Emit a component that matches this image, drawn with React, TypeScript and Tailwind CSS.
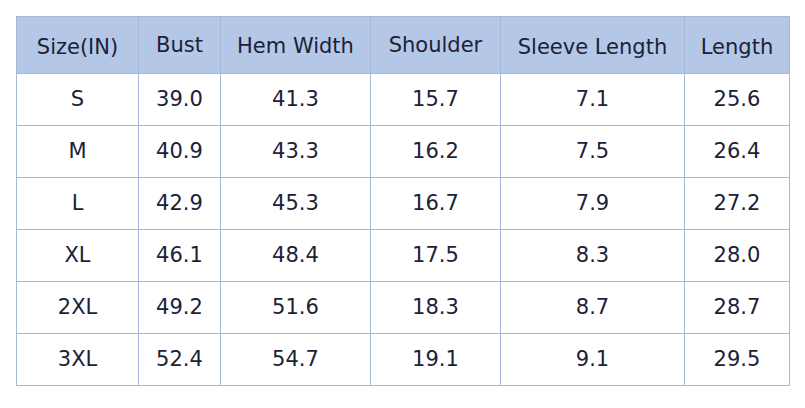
import React from "react";

const headers: { label: string; cls: string }[] = [
  { label: "Size(IN)", cls: "pt-[5px]" },
  { label: "Bust", cls: "pt-0" },
  { label: "Hem Width", cls: "pt-[2px]" },
  { label: "Shoulder", cls: "pt-[1px]" },
  { label: "Sleeve Length", cls: "pt-[5px]" },
  { label: "Length", cls: "pt-[5px]" },
];

const rows: string[][] = [
  ["S", "39.0", "41.3", "15.7", "7.1", "25.6"],
  ["M", "40.9", "43.3", "16.2", "7.5", "26.4"],
  ["L", "42.9", "45.3", "16.7", "7.9", "27.2"],
  ["XL", "46.1", "48.4", "17.5", "8.3", "28.0"],
  ["2XL", "49.2", "51.6", "18.3", "8.7", "28.7"],
  ["3XL", "52.4", "54.7", "19.1", "9.1", "29.5"],
];

export default function App() {
  return (
    <div
      className="w-[805px] h-[408px] bg-white pt-4 pl-4"
      style={{ fontFamily: '"DejaVu Sans", Verdana, sans-serif' }}
    >
      <div className="grid w-[774px] grid-cols-[121px_81px_149px_129px_183px_104px] grid-rows-[56px_repeat(6,51px)] gap-px bg-[#a6b8d6] p-px text-[21px] text-[#1a2238]">
        {headers.map((h) => (
          <div
            key={h.label}
            className={`flex items-center justify-center bg-[#b4c7e7] leading-none ${h.cls}`}
          >
            {h.label}
          </div>
        ))}
        {rows.map((r, i) =>
          r.map((c, j) => (
            <div
              key={`${i}-${j}`}
              className="flex items-center justify-center bg-white leading-none"
            >
              {c}
            </div>
          ))
        )}
      </div>
    </div>
  );
}
